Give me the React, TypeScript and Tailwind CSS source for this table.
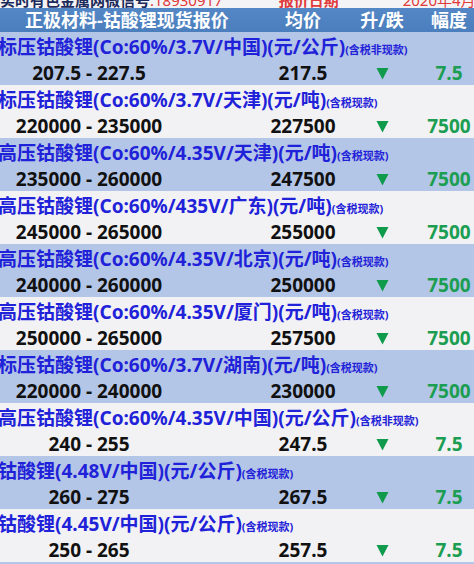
import React from 'react';

type Row = {
  name: string;
  note: string;
  range: string;
  avg: string;
  change: string;
};

const rows: Row[] = [
  { name: '标压钴酸锂(Co:60%/3.7V/中国)(元/公斤)', note: '(含税非现款)', range: '207.5 - 227.5', avg: '217.5', change: '7.5' },
  { name: '标压钴酸锂(Co:60%/3.7V/天津)(元/吨)', note: '(含税现款)', range: '220000 - 235000', avg: '227500', change: '7500' },
  { name: '高压钴酸锂(Co:60%/4.35V/天津)(元/吨)', note: '(含税现款)', range: '235000 - 260000', avg: '247500', change: '7500' },
  { name: '高压钴酸锂(Co:60%/435V/广东)(元/吨)', note: '(含税现款)', range: '245000 - 265000', avg: '255000', change: '7500' },
  { name: '高压钴酸锂(Co:60%/4.35V/北京)(元/吨)', note: '(含税现款)', range: '240000 - 260000', avg: '250000', change: '7500' },
  { name: '高压钴酸锂(Co:60%/4.35V/厦门)(元/吨)', note: '(含税现款)', range: '250000 - 265000', avg: '257500', change: '7500' },
  { name: '标压钴酸锂(Co:60%/3.7V/湖南)(元/吨)', note: '(含税现款)', range: '220000 - 240000', avg: '230000', change: '7500' },
  { name: '高压钴酸锂(Co:60%/4.35V/中国)(元/公斤)', note: '(含税非现款)', range: '240 - 255', avg: '247.5', change: '7.5' },
  { name: '钴酸锂(4.48V/中国)(元/公斤)', note: '(含税现款)', range: '260 - 275', avg: '267.5', change: '7.5' },
  { name: '钴酸锂(4.45V/中国)(元/公斤)', note: '(含税现款)', range: '250 - 265', avg: '257.5', change: '7.5' },
];

function Down() {
  return (
    <svg width="13" height="13" viewBox="0 0 13 13" className="inline-block">
      <path d="M0.5 1 L12.5 1 L6.5 12.5 Z" fill="#109a4c" />
    </svg>
  );
}

export default function App() {
  return (
    <div
      className="w-[474px] h-[564px] overflow-hidden bg-[#f2f2f4] font-bold"
      style={{ fontFamily: '"Noto Sans", "Noto Sans CJK SC", sans-serif' }}
    >
      {/* title line above the header, only its lower edge shows */}
      <div className="h-[8px] overflow-hidden bg-[#f4f4f6]">
        <div className="flex items-end text-[15px] leading-none -mt-[7px] whitespace-nowrap">
          <span className="text-[#1b2a5a]">实时有色金属网微信号<span className="text-[#e03a3a] font-normal">:18930917</span></span>
          <span className="text-[#e03a3a] ml-14">报价日期</span>
          <span className="text-[#e03a3a] font-normal ml-16">2020年4月9日</span>
        </div>
      </div>

      {/* header */}
      <div className="grid grid-cols-[266px_74px_84px_50px] h-[24px] items-center bg-gradient-to-b from-[#5487c6] to-[#4a7ebd] text-white text-[18px] leading-none">
        <div className="text-center pr-3">正极材料-钴酸锂现货报价</div>
        <div className="text-center">均价</div>
        <div className="text-center">升/跌</div>
        <div className="text-center">幅度</div>
      </div>

      {rows.map((r, i) => (
        <div key={i} className={`h-[53px] flex flex-col ${i % 2 === 0 ? 'bg-[#b4c6e7]' : 'bg-[#f2f2f4]'}`}>
          <div className="h-[29px] pt-[2px] flex items-center whitespace-nowrap text-[#1f22d8] -ml-[2px]">
            <span className="text-[19px] leading-none">{r.name}</span>
            <span className="text-[11px] leading-none mt-[4px]">{r.note}</span>
          </div>
          <div className="grid grid-cols-[266px_74px_84px_50px] items-center h-[24px] text-[19px] leading-none">
            <div className="w-[178px] text-center text-[#111]">{r.range}</div>
            <div className="text-center text-[#111]">{r.avg}</div>
            <div className="flex justify-center"><Down /></div>
            <div className="text-center text-[#1c9e52]">{r.change}</div>
          </div>
        </div>
      ))}
      <div className="h-[4px] bg-[#b4c6e7]" />
    </div>
  );
}
